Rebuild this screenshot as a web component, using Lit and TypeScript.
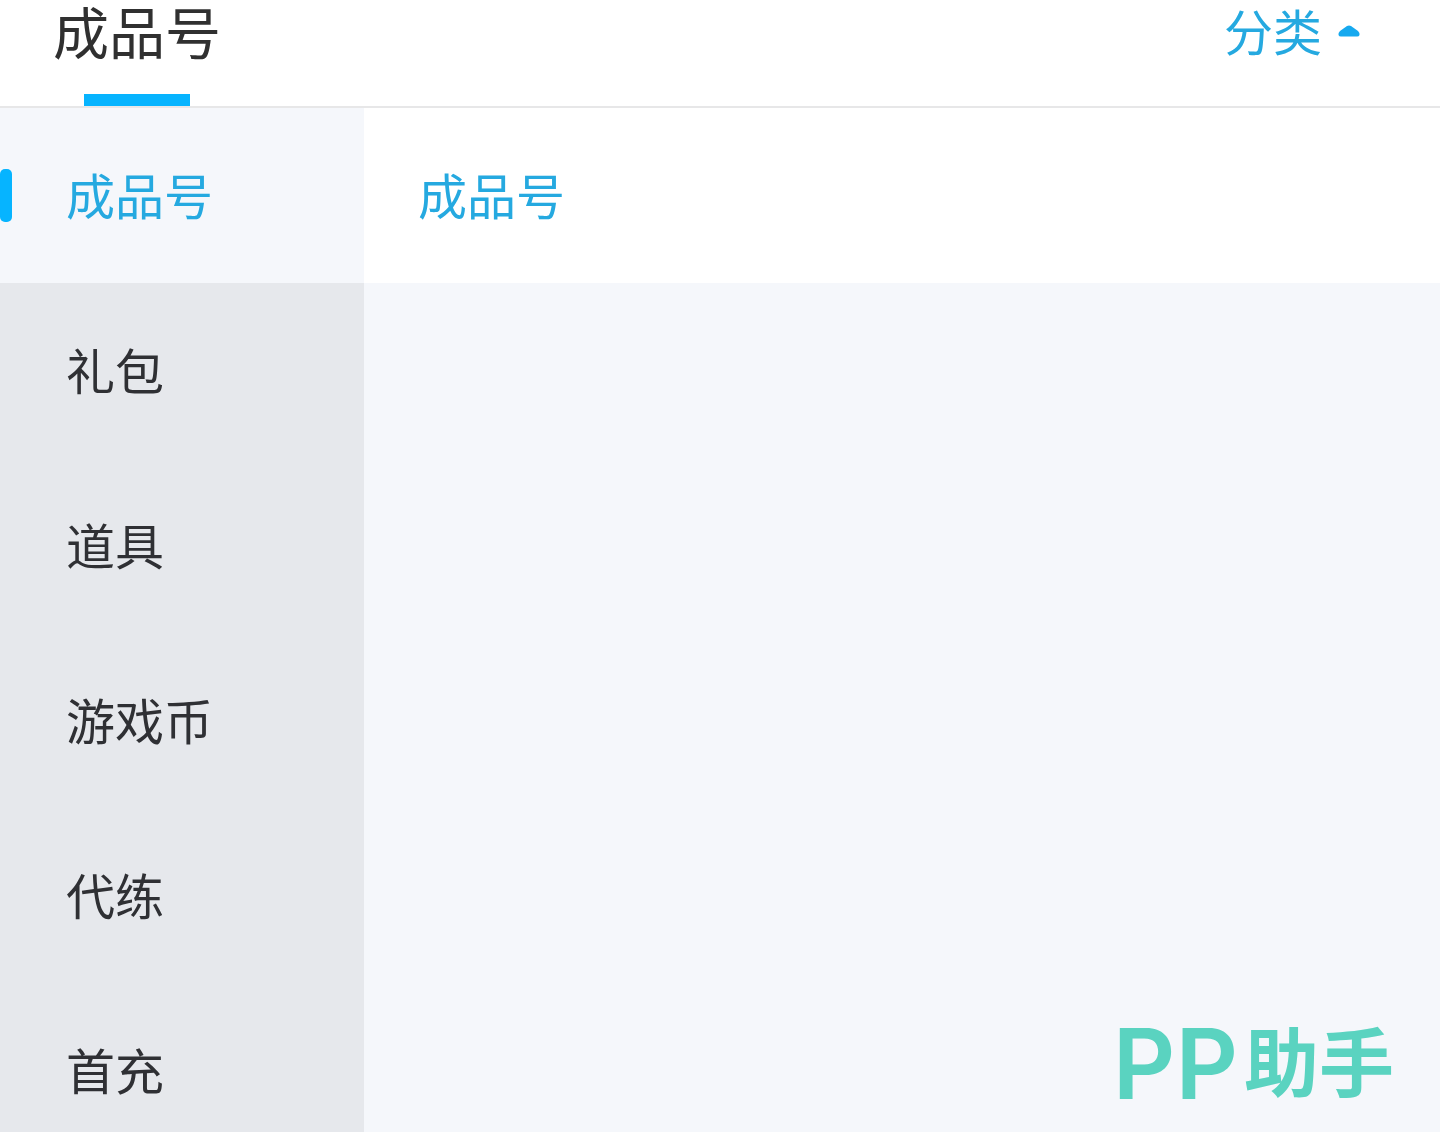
import { LitElement, html, css } from "lit";
import { customElement, state } from "lit/decorators.js";
import { classMap } from "lit/directives/class-map.js";

interface Category {
  name: string;
  items: string[];
}

const CATEGORIES: Category[] = [
  { name: "成品号", items: ["成品号"] },
  { name: "礼包", items: ["礼包"] },
  { name: "道具", items: ["道具"] },
  { name: "游戏币", items: ["游戏币"] },
  { name: "代练", items: ["代练"] },
  { name: "首充", items: ["首充"] },
];

@customElement("app-root")
export class AppRoot extends LitElement {
  static styles = css`
    :host {
      display: flex;
      flex-direction: column;
      min-height: 100vh;
      background: #f5f7fb;
      color: #2f3034;
      font-family: "Noto Sans", "Noto Sans CJK SC", sans-serif;
      font-size: 49px;
      line-height: 68px;
    }
    button {
      margin: 0;
      padding: 0;
      border: 0;
      background: none;
      color: inherit;
      font: inherit;
      text-align: left;
      cursor: pointer;
    }
    .header {
      display: flex;
      justify-content: space-between;
      align-items: flex-start;
      padding: 0 80px 0 53px;
      background: #fff;
      border-bottom: 2px solid #e7e7e8;
      font-family: Inter, "Noto Sans CJK SC", sans-serif;
    }
    .tab {
      display: flex;
      flex-direction: column;
      align-items: center;
      gap: 26px;
      font-size: 56px;
      color: #303030;
    }
    .tab::after {
      content: "";
      width: 106px;
      height: 12px;
      background: #06b4ff;
    }
    .filter {
      display: flex;
      align-items: center;
      gap: 16px;
      color: #25a9e0;
    }
    .caret {
      width: 22px;
      height: 12px;
      margin-bottom: 6px;
      fill: #16a9ef;
    }
    .body {
      flex: 1;
      display: flex;
      align-items: stretch;
    }
    .side {
      flex: none;
      width: 364px;
      height: calc(100vh - 108px);
      overflow: hidden;
      background: #e6e8ec;
    }
    .category {
      display: flex;
      align-items: center;
      width: 100%;
      height: 175px;
      padding-left: 66px;
    }
    .category.active {
      padding-left: 0;
      gap: 54px;
      background: #f5f7fb;
      color: #25a9e0;
    }
    .category.active::before {
      content: "";
      width: 12px;
      height: 53px;
      border-radius: 5px;
      background: #06b4ff;
    }
    .panel {
      flex: 1;
      display: flex;
      flex-direction: column;
      justify-content: space-between;
    }
    .option {
      display: flex;
      align-items: center;
      height: 175px;
      padding-left: 54px;
      background: #fff;
      color: #25a9e0;
      text-decoration: none;
    }
    .brand {
      display: flex;
      align-items: center;
      align-self: flex-end;
      gap: 6px;
      margin: 0 46px 20px 0;
      color: #5ad3c0;
      font-family: Inter, "Noto Sans CJK SC", sans-serif;
      font-size: 75px;
      font-weight: 700;
      line-height: 96px;
    }
    .latin {
      font-size: 97px;
      font-weight: 600;
    }
  `;

  @state() private selected = 0;

  render() {
    return html`
      <header class="header">
        <button class="tab" type="button">成品号</button>
        <button class="filter" type="button" aria-expanded="true">
          分类
          <svg class="caret" viewBox="0 0 22 12" aria-hidden="true">
            <path d="M9 1Q11 0 13 1L20 6Q22 8 21.500 10Q21 11.500 19 11.500H3Q1 11.500 .5 10Q0 8 2 6Z" />
          </svg>
        </button>
      </header>
      <div class="body">
        <nav class="side">
          ${CATEGORIES.map(
            (category, index) => html`
              <button
                type="button"
                class=${classMap({ category: true, active: index === this.selected })}
                @click=${() => (this.selected = index)}
              >${category.name}</button>
            `
          )}
        </nav>
        <main class="panel">
          <div>
            ${CATEGORIES[this.selected].items.map(
              (item) => html`<a class="option" href="#">${item}</a>`
            )}
          </div>
          <div class="brand"><span class="latin">PP</span><span>助手</span></div>
        </main>
      </div>
    `;
  }
}
